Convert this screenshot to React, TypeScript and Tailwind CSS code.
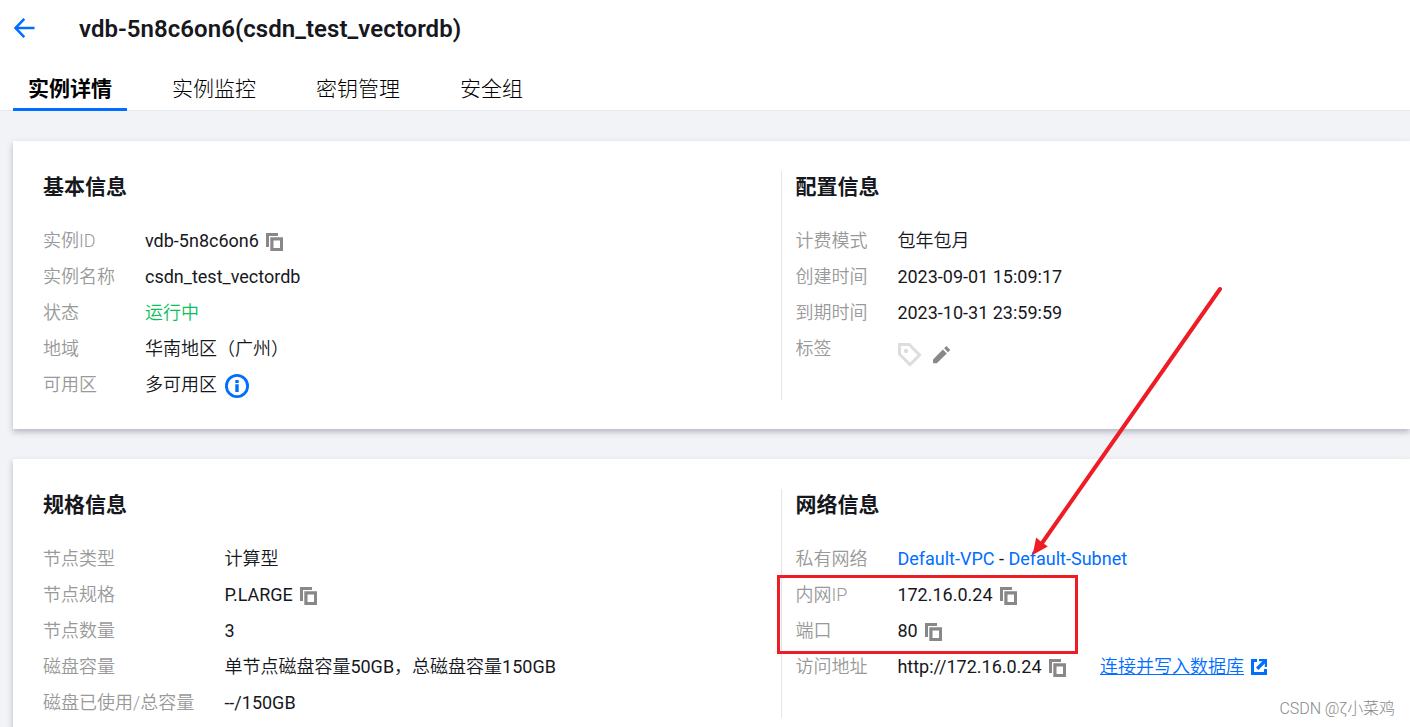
import { ReactNode } from 'react';

interface InfoRow {
  label: string;
  value: ReactNode;
}

interface InfoSectionProps {
  title: string;
  rows: InfoRow[];
  labelClass?: string;
}

const tabs = ['实例详情', '实例监控', '密钥管理', '安全组'];

function CopyIcon() {
  return (
    <svg className="ml-[7px] mt-[2px] shrink-0" width="18" height="18" viewBox="0 0 18 18" fill="#888">
      <path d="M0 0h12v3H3v11H0z" />
      <path fillRule="evenodd" d="M4.3 4.3H17V18H4.3zM7.5 7.5v7.5H14V7.5z" />
    </svg>
  );
}

function InfoIcon() {
  return (
    <svg className="ml-2 mt-[2px] shrink-0" width="24" height="24" viewBox="0 0 24 24" fill="#006eff">
      <circle cx="12" cy="12" r="10.6" fill="none" stroke="#006eff" strokeWidth="2.8" />
      <path d="M10.3 6h3.4v3h-3.4zM10.3 10.2h3.4V18h-3.4z" />
    </svg>
  );
}

function TagIcon() {
  return (
    <svg width="24" height="24" viewBox="0 0 24 24" fill="none">
      <path d="M1.5 1.5h9.7L21.6 12 12 21.6 1.5 11.2z" stroke="#ddd" strokeWidth="3" />
      <circle cx="8" cy="8" r="2.2" fill="#ddd" />
    </svg>
  );
}

function PencilIcon() {
  return (
    <svg width="18" height="18" viewBox="0 0 18 18" fill="#888">
      <path d="M0 13.4 9.9 3.5l3.9 3.9L3.8 17.2H0z" />
      <path d="M11.1 2.3 13.4 0l3.9 3.9L15 6.2z" />
    </svg>
  );
}

function ExternalIcon() {
  return (
    <svg className="ml-[7px] shrink-0" width="16" height="16" viewBox="0 0 16 16" fill="#006eff">
      <path d="M0 0h6v3H3v10h10v-3h3v6H0z" />
      <path d="M8 0h8v8h-2.2V4.6L7.4 11 5 8.6l6.4-6.4H8z" />
    </svg>
  );
}

function InfoSection({ title, rows, labelClass = 'w-[102px]' }: InfoSectionProps) {
  return (
    <section>
      <h3 className="h-8 text-[21px] leading-8 font-bold">{title}</h3>
      <dl className="mt-5 font-[Roboto,'Noto_Sans_CJK_SC_DemiLight','Noto_Sans_CJK_SC',sans-serif]">
        {rows.map((row) => (
          <div key={row.label} className="flex h-9 items-center text-[18px] leading-9 whitespace-nowrap">
            <dt className={`${labelClass} shrink-0 font-light text-[#999]`}>{row.label}</dt>
            <dd className="flex items-center">{row.value}</dd>
          </div>
        ))}
      </dl>
    </section>
  );
}

function Card({ left, right }: { left: ReactNode; right: ReactNode }) {
  return (
    <div className="flex h-[288px] shrink-0 items-start bg-white pt-[30px] pl-[30px] shadow-[0_3px_6px_rgba(54,58,80,0.32)]">
      <div className="w-[738px] shrink-0">{left}</div>
      <div className="h-[229px] grow border-l border-[#e5e5e5] pl-[13.4px]">{right}</div>
    </div>
  );
}

const basicRows: InfoRow[] = [
  { label: '实例ID', value: <>vdb-5n8c6on6<CopyIcon /></> },
  { label: '实例名称', value: 'csdn_test_vectordb' },
  { label: '状态', value: <span className="text-[#0abf5b]">运行中</span> },
  { label: '地域', value: '华南地区（广州）' },
  { label: '可用区', value: <>多可用区<InfoIcon /></> },
];

const configRows: InfoRow[] = [
  { label: '计费模式', value: '包年包月' },
  { label: '创建时间', value: '2023-09-01 15:09:17' },
  { label: '到期时间', value: '2023-10-31 23:59:59' },
  { label: '标签', value: <span className="mt-[11px] ml-[0.6px] flex items-center gap-[11px]"><TagIcon /><PencilIcon /></span> },
];

const specRows: InfoRow[] = [
  { label: '节点类型', value: '计算型' },
  { label: '节点规格', value: <>P.LARGE<CopyIcon /></> },
  { label: '节点数量', value: '3' },
  { label: '磁盘容量', value: '单节点磁盘容量50GB，总磁盘容量150GB' },
  { label: '磁盘已使用/总容量', value: '--/150GB' },
];

const networkRows: InfoRow[] = [
  {
    label: '私有网络',
    value: (
      <span>
        <a className="text-[#006eff]">Default-VPC</a> - <a className="text-[#006eff]">Default-Subnet</a>
      </span>
    ),
  },
  { label: '内网IP', value: <>172.16.0.24<CopyIcon /></> },
  { label: '端口', value: <>80<CopyIcon /></> },
  {
    label: '访问地址',
    value: (
      <>
        http://172.16.0.24
        <CopyIcon />
        <a className="ml-[33.4px] text-[#006eff] underline">连接并写入数据库</a>
        <ExternalIcon />
      </>
    ),
  },
];

export default function App() {
  return (
    <div className="relative flex h-[727px] w-[1410px] flex-col overflow-hidden bg-[#f2f3f7] font-[Roboto,'Noto_Sans_CJK_SC',sans-serif] text-[#16181d]">
      <header className="h-[111px] shrink-0 border-b border-[#e3e7ee] bg-white">
        <div className="flex h-[58px] items-center pl-[14px]">
          <svg className="mb-[2px]" width="21" height="20" viewBox="0 0 21 20" fill="none" stroke="#006eff" strokeWidth="2.5">
            <path d="M20.5 10H2M10.3 .8 1.6 10l8.7 9.2" />
          </svg>
          <h1 className="ml-[44px] text-[24px] leading-8 font-semibold tracking-[0.04px]">vdb-5n8c6on6(csdn_test_vectordb)</h1>
        </div>
        <nav className="flex h-[53px] gap-[30px] pl-[13px] text-[21px] leading-[62px] text-black">
          {tabs.map((tab, index) => (
            <a
              key={tab}
              className={index === 0 ? 'border-b-3 border-[#006eff] px-[15px] font-bold' : 'px-[15px] font-light'}
            >
              {tab}
            </a>
          ))}
        </nav>
      </header>

      <main className="flex flex-col gap-[30px] pt-[30px] pl-[13px]">
        <Card
          left={<InfoSection title="基本信息" rows={basicRows} />}
          right={<InfoSection title="配置信息" rows={configRows} />}
        />
        <Card
          left={<InfoSection title="规格信息" rows={specRows} labelClass="w-[181.4px]" />}
          right={<InfoSection title="网络信息" rows={networkRows} />}
        />
      </main>

      {/* callout drawn over the connection details */}
      <div className="absolute top-[575px] left-[777px] h-[79px] w-[301px] border-3 border-[#ee1c25]" />
      <svg className="absolute top-[280px] left-[1025px]" width="205" height="285" viewBox="1025 280 205 285">
        <path d="M1220 289 1040 546" stroke="#ee1c25" strokeWidth="4" strokeLinecap="round" />
        <path d="M1032.5 555 1036.2 537.5l4 3.4 7.6 5.6z" fill="#ee1c25" />
      </svg>
      <div className="absolute right-[15px] bottom-[6px] text-[16px] leading-6 font-light tracking-[-0.06px] text-[#888]">
        CSDN @ζ小菜鸡
      </div>
    </div>
  );
}
